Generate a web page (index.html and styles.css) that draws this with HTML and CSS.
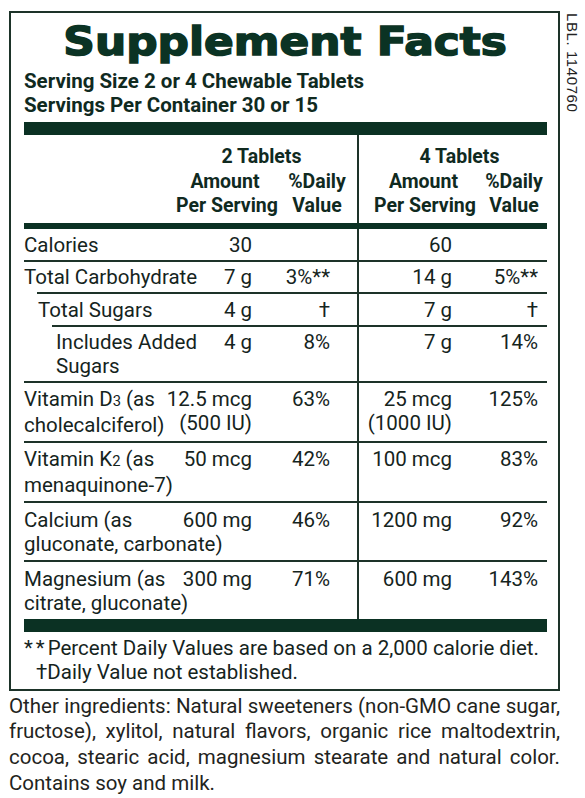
FILE: index.html
```html
<!DOCTYPE html>
<html lang="en">
<head>
<meta charset="utf-8">
<title>Supplement Facts</title>
<link rel="stylesheet" href="styles.css">
</head>
<body>
<div class="page">
  <div class="label">
    <h1 class="title"><span class="title-text">Supplement Facts</span></h1>
    <p class="serving">Serving Size 2 or 4 Chewable Tablets<br>Servings Per Container 30 or 15</p>
    <div class="bar bar-thick"></div>

    <div class="head">
      <div></div>
      <div class="grp grp2">
        <div class="grp-title">2 Tablets</div>
        <div class="grp-cols">
          <div class="sub sub-amt">Amount<br>Per Serving</div>
          <div class="sub sub-dv">%Daily<br>Value</div>
        </div>
      </div>
      <div class="grp grp4">
        <div class="grp-title">4 Tablets</div>
        <div class="grp-cols">
          <div class="sub sub-amt">Amount<br>Per Serving</div>
          <div class="sub sub-dv">%Daily<br>Value</div>
        </div>
      </div>
    </div>
    <div class="bar bar-mid"></div>

    <div class="row row-first">
      <div class="c-label">Calories</div>
      <div class="c-amt1">30</div>
      <div class="c-dv1"></div>
      <div class="c-amt2">60</div>
      <div class="c-dv2"></div>
    </div>
    <div class="row row-tight">
      <div class="c-label">Total Carbohydrate</div>
      <div class="c-amt1">7 g</div>
      <div class="c-dv1">3%**</div>
      <div class="c-amt2">14 g</div>
      <div class="c-dv2">5%**</div>
    </div>
    <div class="row ind1">
      <div class="c-label">Total Sugars</div>
      <div class="c-amt1">4 g</div>
      <div class="c-dv1">†</div>
      <div class="c-amt2">7 g</div>
      <div class="c-dv2">†</div>
    </div>
    <div class="row ind2 row-two-a">
      <div class="c-label">Includes Added<br>Sugars</div>
      <div class="c-amt1">4 g</div>
      <div class="c-dv1">8%</div>
      <div class="c-amt2">7 g</div>
      <div class="c-dv2">14%</div>
    </div>
    <div class="row row-two-b">
      <div class="c-label">Vitamin D<span class="sub-num">3</span> (as<br>cholecalciferol)</div>
      <div class="c-amt1">12.5 mcg<br>(500 IU)</div>
      <div class="c-dv1">63%</div>
      <div class="c-amt2">25 mcg<br>(1000 IU)</div>
      <div class="c-dv2">125%</div>
    </div>
    <div class="row row-two-b">
      <div class="c-label">Vitamin K<span class="sub-num">2</span> (as<br>menaquinone-7)</div>
      <div class="c-amt1">50 mcg</div>
      <div class="c-dv1">42%</div>
      <div class="c-amt2">100 mcg</div>
      <div class="c-dv2">83%</div>
    </div>
    <div class="row row-two-c">
      <div class="c-label">Calcium (as<br>gluconate, carbonate)</div>
      <div class="c-amt1">600 mg</div>
      <div class="c-dv1">46%</div>
      <div class="c-amt2">1200 mg</div>
      <div class="c-dv2">92%</div>
    </div>
    <div class="row row-two-c">
      <div class="c-label">Magnesium (as<br>citrate, gluconate)</div>
      <div class="c-amt1">300 mg</div>
      <div class="c-dv1">71%</div>
      <div class="c-amt2">600 mg</div>
      <div class="c-dv2">143%</div>
    </div>

    <div class="bar bar-thick bar-bottom"></div>
    <div class="foot">
      <p class="foot-line"><span class="stars">**</span>Percent Daily Values are based on a 2,000 calorie diet.</p>
      <p class="foot-line foot-dagger">†Daily Value not established.</p>
    </div>
  </div>
  <div class="lbl">LBL. 1140760</div>
</div>
<p class="ingredients">
  <span class="jl">Other ingredients: Natural sweeteners (non-GMO cane sugar,</span>
  <span class="jl">fructose), xylitol, natural flavors, organic rice maltodextrin,</span>
  <span class="jl">cocoa, stearic acid, magnesium stearate and natural color.</span>
  <span class="ll">Contains soy and milk.</span>
</p>
</body>
</html>
```

FILE: styles.css
```css
* { box-sizing: border-box; }

body {
  margin: 0;
  background: #ffffff;
  color: #15241d;
  font-family: Roboto, "Liberation Sans", sans-serif;
}

.page {
  display: flex;
  align-items: flex-start;
  padding: 11px 0 0 9px;
}

.label {
  width: 551px;
  border: 2px solid #1d3329;
  padding: 0 11px 5px 13px;
}

.title {
  margin: 0;
  padding-top: 7px;
  height: 51px;
  line-height: 44px;
  text-align: center;
  font-family: "DejaVu Sans", "Liberation Sans", sans-serif;
  font-weight: 700;
  font-size: 39px;
  color: #0b3324;
}

.title-text {
  display: inline-block;
  transform: scaleX(1.125);
  -webkit-text-stroke: 1.5px #0b3324;
}

.serving {
  margin: 5px 0 0;
  font-weight: 700;
  font-size: 20.5px;
  line-height: 24px;
  color: #102a1f;
}

.bar {
  background: #0b3123;
}

.bar-thick {
  height: 13px;
  margin-top: 5px;
}

.bar-mid {
  height: 6px;
}

.bar-bottom {
  margin-top: 0;
}

/* header */
.head {
  display: grid;
  grid-template-columns: 1fr 185px 190px;
}

.grp {
  padding-top: 10px;
  padding-bottom: 4px;
  font-weight: 700;
  font-size: 19.5px;
  line-height: 24.5px;
  color: #102a1f;
}

.grp2 {
  padding-left: 4px;
  padding-right: 10px;
}

.grp4 {
  border-left: 2px solid #1d3329;
  padding-left: 15px;
  padding-right: 2px;
}

.grp-title {
  text-align: center;
}

.grp-cols {
  display: flex;
  gap: 13px;
}

.grp4 .grp-cols {
  gap: 10px;
}

.sub {
  text-align: center;
  white-space: nowrap;
}

.grp2 .sub-amt { width: 98px; }
.grp2 .sub-dv { width: 60px; }
.grp4 .sub-amt { width: 99px; }
.grp4 .sub-dv { width: 62px; }

/* rows */
.row {
  display: grid;
  grid-template-columns: 1fr 78px 27px 95px 86px 9px;
  border-top: 2px solid #1d3329;
  font-size: 20.5px;
  line-height: 24px;
}

.row > div {
  padding-top: 4px;
  padding-bottom: 3px;
}

.row-first {
  border-top: none;
}

.row-tight > div {
  padding-top: 3px;
  padding-bottom: 3px;
}

.row-two-a > div {
  padding-top: 3px;
  padding-bottom: 3px;
}

.row-two-b > div {
  padding-top: 4px;
  padding-bottom: 4px;
}

.row-two-c > div {
  padding-top: 5px;
  padding-bottom: 4px;
}

.ind1 {
  margin-left: 13px;
}

.ind1 .c-label {
  padding-left: 1px;
}

.ind2 {
  margin-left: 28px;
}

.ind2 .c-label {
  padding-left: 4px;
}

.c-label {
  grid-column: 1;
  grid-row: 1;
  white-space: nowrap;
}

.c-amt1 {
  grid-column: 1;
  grid-row: 1;
  justify-self: end;
  text-align: right;
  white-space: nowrap;
}

.c-dv1 {
  grid-column: 2;
  grid-row: 1;
  text-align: right;
}

.c-amt2 {
  grid-column: 4;
  grid-row: 1;
  text-align: right;
  border-left: 2px solid #1d3329;
  white-space: nowrap;
}

.c-dv2 {
  grid-column: 5;
  grid-row: 1;
  text-align: right;
}

.sub-num {
  font-size: 0.72em;
}

/* footnote */
.foot {
  padding-top: 4px;
  font-size: 20.5px;
  line-height: 24px;
}

.foot-line {
  margin: 0;
  white-space: nowrap;
}

.stars {
  letter-spacing: 3px;
}

.foot-dagger {
  padding-left: 12px;
}

/* LBL code */
.lbl {
  writing-mode: vertical-rl;
  font-family: "Liberation Sans", Arial, sans-serif;
  font-size: 15px;
  color: #222;
  margin-left: 4px;
  padding-top: 2px;
  letter-spacing: 0.6px;
}

/* ingredients */
.ingredients {
  margin: 3px 0 0 9px;
  width: 551px;
  font-size: 20.5px;
  line-height: 25.7px;
  color: #1f2421;
}

.jl {
  display: block;
  text-align: justify;
  text-align-last: justify;
}

.ll {
  display: block;
}
```
